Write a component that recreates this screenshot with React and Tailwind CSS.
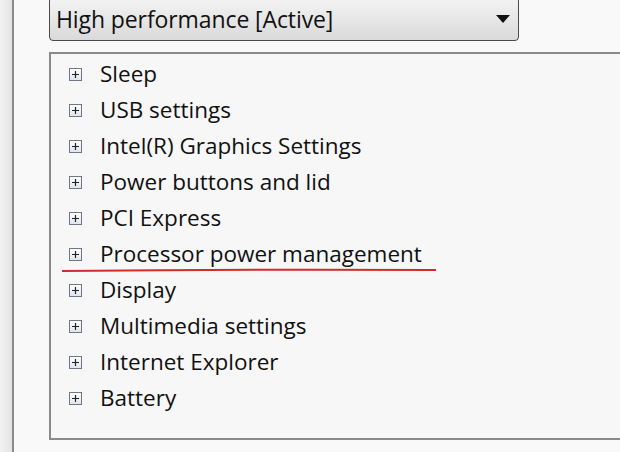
import React from 'react';

const items = [
  'Sleep',
  'USB settings',
  'Intel(R) Graphics Settings',
  'Power buttons and lid',
  'PCI Express',
  'Processor power management',
  'Display',
  'Multimedia settings',
  'Internet Explorer',
  'Battery',
];

const PlusBox = () => (
  <span className="flex h-[13px] w-[13px] shrink-0 items-center justify-center border border-[#6f7784] bg-gradient-to-b from-white to-[#e2e5ea]">
    <svg width="9" height="9" viewBox="0 0 9 9">
      <path d="M1 4.5h7M4.5 1v7" stroke="#1a2438" strokeWidth="1.2" />
    </svg>
  </span>
);

export default function App() {
  return (
    <div
      className="relative flex h-[452px] w-[620px] overflow-hidden bg-[#f9f9f9] text-[#111]"
      style={{ fontFamily: '"Open Sans", "Noto Sans", sans-serif' }}
    >
      <div className="w-[14px] shrink-0 border-r-2 border-[#8a8a8a] bg-gradient-to-r from-[#f2f2f2] to-[#e4e4e4]" />
      <div className="flex flex-1 flex-col pl-[35px]">
        <div className="mt-[-3px] flex h-[44px] w-[470px] items-center justify-between rounded-[4px] border border-[#4a4a4a] bg-gradient-to-b from-[#f4f4f4] to-[#dadada] pl-[6px] pr-[8px]">
          <span className="text-[23px] leading-none tracking-[-0.1px]">High performance [Active]</span>
          <svg width="14" height="8" viewBox="0 0 14 8">
            <path d="M0 0h14L7 8z" fill="#111" />
          </svg>
        </div>
        <div className="mt-[11px] h-[388px] w-[600px] border-2 border-[#8a8a8a] bg-[#f7f7f7] pt-[2px]">
          {items.map((label) => (
            <div key={label} className="flex h-[36px] items-center pl-[18px]">
              <PlusBox />
              <span className="ml-[18px] text-[22.5px] leading-none">{label}</span>
            </div>
          ))}
        </div>
      </div>
      <svg className="absolute left-[60px] top-[266px]" width="380" height="8" viewBox="0 0 380 8">
        <path d="M2 5 Q 190 3 376 4" stroke="#d42a2a" strokeWidth="2" fill="none" />
      </svg>
    </div>
  );
}
